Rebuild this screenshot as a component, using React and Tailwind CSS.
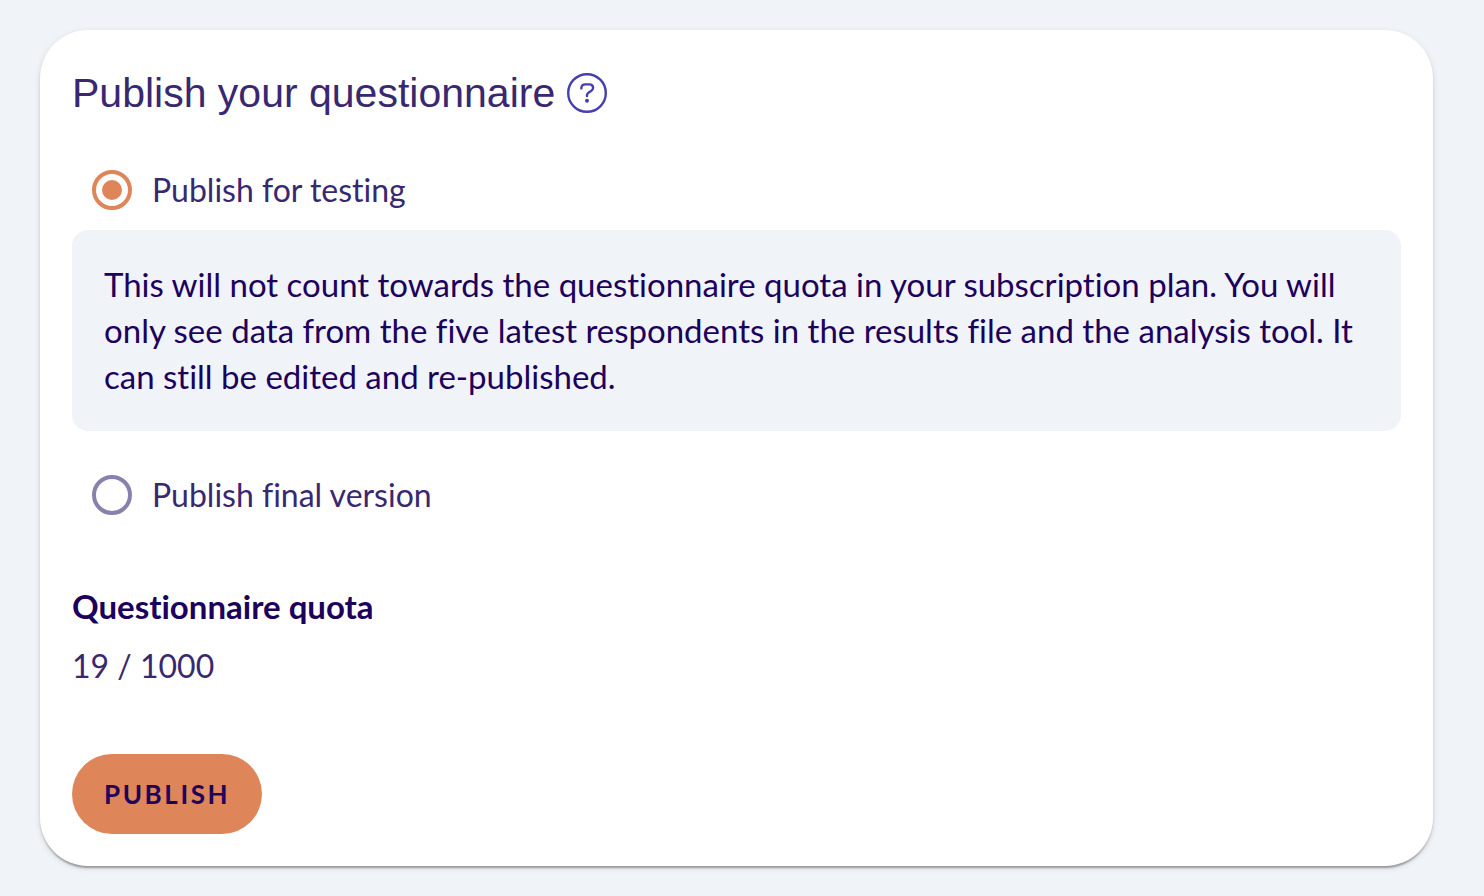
import { useState } from 'react'

function PublishOption({ label, value, selected, onSelect }) {
  return (
    <label className="flex h-20 w-fit cursor-pointer items-center gap-5 pl-5 text-[32px] text-[#39286f]">
      <input
        type="radio"
        name="publish"
        value={value}
        checked={selected}
        onChange={() => onSelect(value)}
        className="grid size-10 appearance-none place-items-center rounded-full border-4 border-[#8a80ae] before:size-5 before:rounded-full checked:border-[#de855a] checked:before:bg-[#de855a]"
      />
      {label}
    </label>
  )
}

export default function App() {
  const [mode, setMode] = useState('testing')

  return (
    <div className="min-h-screen bg-[#f0f4f9] pt-[30px] pr-[51px] pb-[30px] pl-10 font-['Lato',sans-serif] text-[#1c005c] [font-variant-ligatures:none]">
      <main className="rounded-[48px] bg-white px-8 pt-10 pb-8 shadow-[0_4px_2px_-2px_rgba(0,0,0,0.2),0_2px_2px_rgba(0,0,0,0.14),0_2px_6px_rgba(0,0,0,0.12)]">
        <div className="flex items-center gap-3">
          <h1 className="font-['Liberation_Sans',sans-serif] text-[41px] leading-[46px] text-[#39286f]">Publish your questionnaire</h1>
          <button type="button" aria-label="Help" className="text-[#4540ad]">
            <svg viewBox="0 0 40 40" className="size-10" fill="none" stroke="currentColor" strokeWidth="2.4">
              <circle cx="20" cy="20" r="18.8" />
              <path strokeLinecap="round" d="M14.3 15.4c0-2.6 1.5-4 3.9-4h4c2.3 0 3.9 1.4 3.9 3.3 0 1.5-.7 2.4-2 3.2l-2.4 1.5c-1.1.7-1.7 1.5-1.7 2.9v.8" />
              <circle cx="20" cy="27.8" r="2" fill="currentColor" stroke="none" />
            </svg>
          </button>
        </div>

        <div className="mt-[34px]">
          <PublishOption label="Publish for testing" value="testing" selected={mode === 'testing'} onSelect={setMode} />
          <p className="mb-6 rounded-2xl bg-[#f0f4f9] px-8 pt-[31px] pb-8 text-[33px] leading-[46px]">
            This will not count towards the questionnaire quota in your subscription plan. You will only see data from the five latest respondents in the results file and the analysis tool. It can still be edited and re-published.
          </p>
          <PublishOption label="Publish final version" value="final" selected={mode === 'final'} onSelect={setMode} />
        </div>

        <h2 className="mt-[47px] text-[33px] leading-[48px] font-bold">Questionnaire quota</h2>
        <p className="mt-3 text-[32px] leading-[48px] text-[#39286f]">19 / 1000</p>

        <button type="button" className="mt-16 h-20 rounded-full bg-[#de855a] px-8 text-[26px] font-bold tracking-widest">
          PUBLISH
        </button>
      </main>
    </div>
  )
}
